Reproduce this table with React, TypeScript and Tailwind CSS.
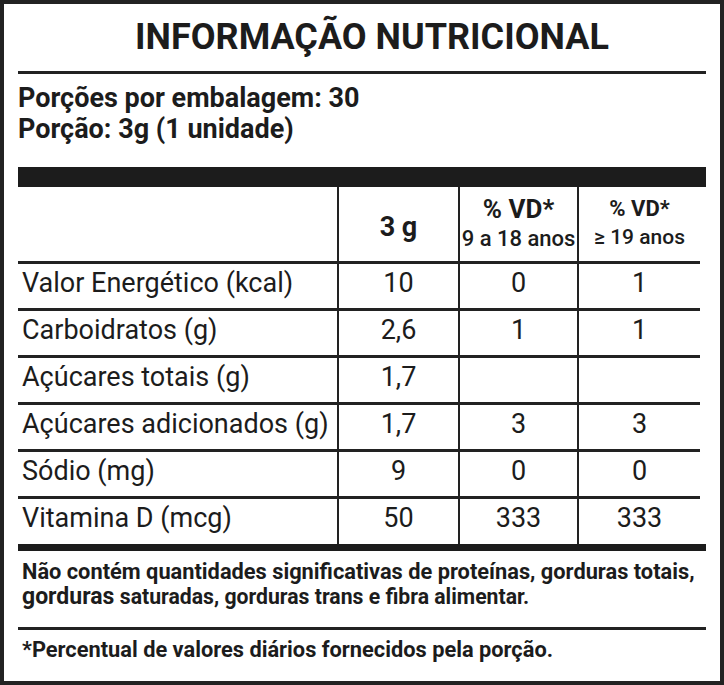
const rows = [
  { name: "Valor Energético (kcal)", qty: "10", vd1: "0", vd2: "1" },
  { name: "Carboidratos (g)", qty: "2,6", vd1: "1", vd2: "1" },
  { name: "Açúcares totais (g)", qty: "1,7", vd1: "", vd2: "" },
  { name: "Açúcares adicionados (g)", qty: "1,7", vd1: "3", vd2: "3" },
  { name: "Sódio (mg)", qty: "9", vd1: "0", vd2: "0" },
  { name: "Vitamina D (mcg)", qty: "50", vd1: "333", vd2: "333" },
];

export default function App() {
  return (
    <div className="w-[724px] h-[685px] border-4 border-[#222] bg-white px-[14px] text-[#1c1c1c] font-['Roboto',sans-serif]">
      <div className="h-[67px] flex items-center justify-center pl-[20px] pb-[2px] text-[36px] font-bold leading-none">
        INFORMAÇÃO NUTRICIONAL
      </div>
      <div className="h-[3px] bg-[#222]" />

      <div className="pt-[9px] text-[27px] font-bold leading-[31px]">
        <div>Porções por embalagem: 30</div>
        <div>Porção: 3g (1 unidade)</div>
      </div>

      <div className="mt-[22px] h-[20px] bg-[#1c1c1c]" />

      <div className="grid grid-cols-[319px_121px_119px_123px]">
        {/* header */}
        <div className="h-[77px] border-b-[3px] border-[#222]" />
        <div className="h-[77px] border-b-[3px] border-l-2 border-[#222] flex items-center justify-center pt-[6px] text-[27px] font-bold">
          3 g
        </div>
        <div className="h-[77px] border-b-[3px] border-l-2 border-[#222] flex flex-col items-center justify-center pb-[2px] leading-none">
          <span className="text-[26px] font-bold">% VD*</span>
          <span className="mt-[6px] text-[22px] font-medium">9 a 18 anos</span>
        </div>
        <div className="h-[77px] border-b-[3px] border-l-2 border-[#222] flex flex-col items-center justify-center pb-[2px] leading-none">
          <span className="text-[22px] font-bold">% VD*</span>
          <span className="mt-[7px] text-[21px] font-medium">≥ 19 anos</span>
        </div>

        {rows.map((r, i) => {
          const last = i === rows.length - 1;
          const line = last ? "h-[45px]" : "h-[47px] border-b-[3px]";
          return [
            <div key={`${i}a`} className={`${line} border-[#222] flex items-center pl-[4px] pb-[6px] text-[27px] whitespace-nowrap`}>
              {r.name}
            </div>,
            <div key={`${i}b`} className={`${line} border-l-2 border-[#222] flex items-center justify-center pb-[6px] text-[27px]`}>
              {r.qty}
            </div>,
            <div key={`${i}c`} className={`${line} border-l-2 border-[#222] flex items-center justify-center pb-[6px] text-[27px]`}>
              {r.vd1}
            </div>,
            <div key={`${i}d`} className={`${line} border-l-2 border-[#222] flex items-center justify-center pb-[6px] text-[27px]`}>
              {r.vd2}
            </div>,
          ];
        })}
      </div>

      <div className="h-[7px] bg-[#1c1c1c]" />

      <div className="h-[76px] pt-[8px] pl-[4px] text-[21.8px] font-bold leading-[25px] whitespace-nowrap">
        <div>Não contém quantidades significativas de proteínas, gorduras totais,</div>
        <div>
          <span className="text-[23px]">gorduras</span> <span className="text-[21.2px]">saturadas, gorduras trans e fibra alimentar.</span>
        </div>
      </div>
      <div className="h-[3px] bg-[#222]" />
      <div className="pt-[7px] pl-[4px] text-[21.8px] font-bold leading-[25px]">
        *Percentual de valores diários fornecidos pela porção.
      </div>
    </div>
  );
}
